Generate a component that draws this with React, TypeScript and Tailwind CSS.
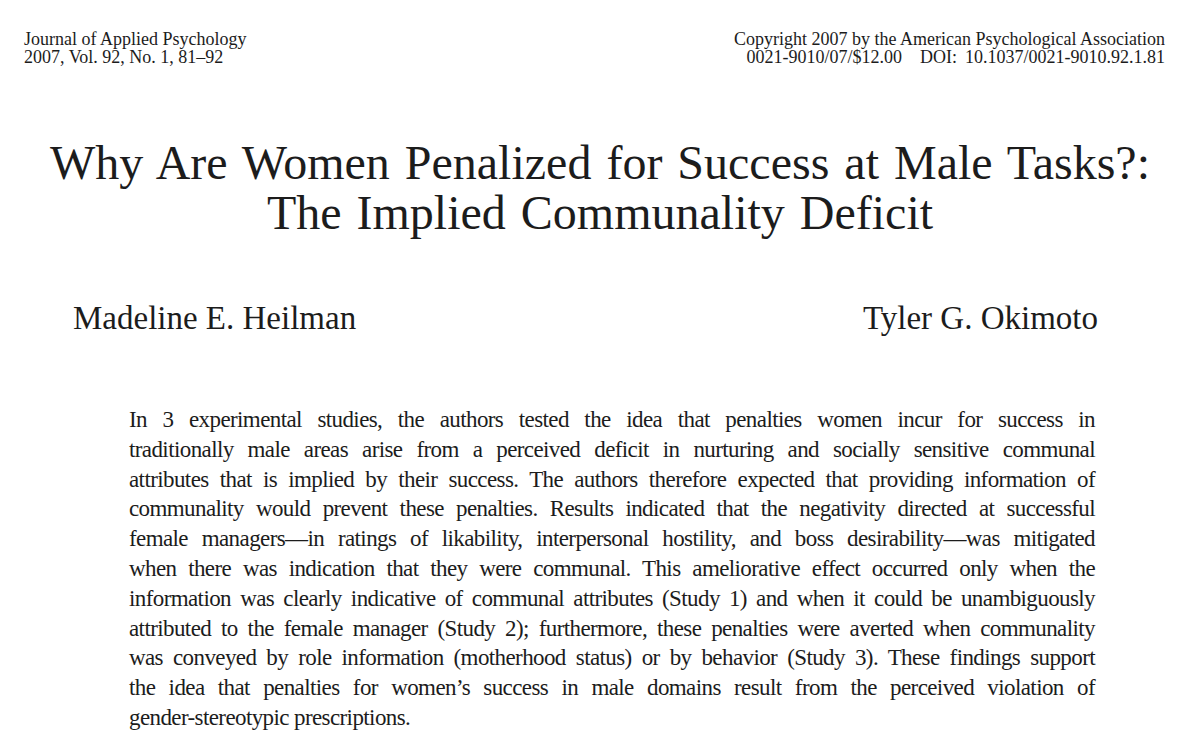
const abstractLines = [
  "In 3 experimental studies, the authors tested the idea that penalties women incur for success in",
  "traditionally male areas arise from a perceived deficit in nurturing and socially sensitive communal",
  "attributes that is implied by their success. The authors therefore expected that providing information of",
  "communality would prevent these penalties. Results indicated that the negativity directed at successful",
  "female managers\u2014in ratings of likability, interpersonal hostility, and boss desirability\u2014was mitigated",
  "when there was indication that they were communal. This ameliorative effect occurred only when the",
  "information was clearly indicative of communal attributes (Study 1) and when it could be unambiguously",
  "attributed to the female manager (Study 2); furthermore, these penalties were averted when communality",
  "was conveyed by role information (motherhood status) or by behavior (Study 3). These findings support",
  "the idea that penalties for women\u2019s success in male domains result from the perceived violation of",
];

export default function App() {
  return (
    <main className="h-[749px] w-[1200px] overflow-hidden bg-white font-['Liberation_Serif','Times_New_Roman',serif] text-[#1c1c1c]">
      <header className="flex justify-between pl-[24px] pr-[35px] pt-[30px] text-[18px] leading-[18px]">
        <div>
          <p>Journal of Applied Psychology</p>
          <p>2007, Vol. 92, No. 1, 81&ndash;92</p>
        </div>
        <div className="text-right">
          <p>Copyright 2007 by the American Psychological Association</p>
          <p>
            0021-9010/07/$12.00<span className="ml-[18px]">DOI:</span>
            <span className="ml-[8px]">10.1037/0021-9010.92.1.81</span>
          </p>
        </div>
      </header>

      <h1 className="mt-[72px] text-center text-[48px] leading-[50px] [word-spacing:3px]">
        Why Are Women Penalized for Success at Male Tasks?:
        <br />
        The Implied Communality Deficit
      </h1>

      <div className="mt-[60px] flex justify-between pl-[73px] pr-[102px] text-[33px] leading-[40px]">
        <p>Madeline E. Heilman</p>
        <p>Tyler G. Okimoto</p>
      </div>

      <div className="ml-[129px] mt-[67px] w-[966px] text-[23px] leading-[29.8px] tracking-[-0.6px]">
        {abstractLines.map((line) => (
          <p key={line} className="text-justify [text-align-last:justify]">
            {line}
          </p>
        ))}
        <p>gender-stereotypic prescriptions.</p>
      </div>
    </main>
  );
}
